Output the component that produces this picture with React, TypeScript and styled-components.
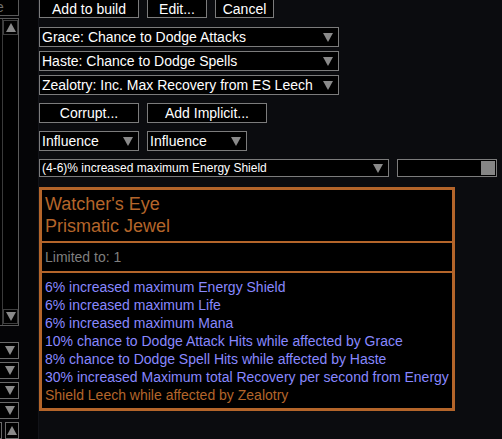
import styled, { createGlobalStyle } from "styled-components";

const GlobalStyle = createGlobalStyle`
  html, body {
    margin: 0;
    padding: 0;
    background: #0b0c0f;
    overflow: hidden;
  }
  body {
    font-family: "Liberation Sans", Arial, sans-serif;
    color: #fff;
  }
`;

const mods = [
  { text: "6% increased maximum Energy Shield", crafted: false },
  { text: "6% increased maximum Life", crafted: false },
  { text: "6% increased maximum Mana", crafted: false },
  { text: "10% chance to Dodge Attack Hits while affected by Grace", crafted: false },
  { text: "8% chance to Dodge Spell Hits while affected by Haste", crafted: false },
  { text: "30% increased Maximum total Recovery per second from Energy", crafted: false },
  { text: "Shield Leech while affected by Zealotry", crafted: true },
];

const Arrow = ({ up }: { up?: boolean }) => (
  <svg width="10" height="9" viewBox="0 0 10 9">
    <polygon points={up ? "0,9 10,9 5,0" : "0,0 10,0 5,9"} fill="#8a8a8a" />
  </svg>
);

export default function App() {
  return (
    <>
      <GlobalStyle />
      <Page>
        <Side>
          <SearchBox>
            <span>e</span>
          </SearchBox>
          <List>
            <ScrollCol>
              <ScrollBtn>
                <Arrow up />
              </ScrollBtn>
              <ScrollBtn>
                <Arrow />
              </ScrollBtn>
            </ScrollCol>
          </List>
          <SideDrops>
            {[0, 1, 2, 3].map((i) => (
              <SideDrop key={i}>
                <Arrow />
              </SideDrop>
            ))}
            <SideFoot>
              <FootStub />
              <FootBtn>
                <Arrow up />
              </FootBtn>
            </SideFoot>
          </SideDrops>
        </Side>

        <Main>
          <Row $top>
            <Button $w={100}>Add to build</Button>
            <Button $w={60}>Edit...</Button>
            <Button $w={59}>Cancel</Button>
          </Row>

          <Drops>
            <Dropdown $w={300}>
              <span>Grace: Chance to Dodge Attacks</span>
              <Arrow />
            </Dropdown>
            <Dropdown $w={300}>
              <span>Haste: Chance to Dodge Spells</span>
              <Arrow />
            </Dropdown>
            <Dropdown $w={300}>
              <span>Zealotry: Inc. Max Recovery from ES Leech</span>
              <Arrow />
            </Dropdown>
          </Drops>

          <Row>
            <Button $w={100} $h={20}>Corrupt...</Button>
            <Button $w={120} $h={20}>Add Implicit...</Button>
          </Row>

          <Row>
            <Dropdown $w={100}>
              <span>Influence</span>
              <Arrow />
            </Dropdown>
            <Dropdown $w={100}>
              <span>Influence</span>
              <Arrow />
            </Dropdown>
          </Row>

          <Row>
            <Dropdown $w={350} $h={18} $small>
              <span>(4-6)% increased maximum Energy Shield</span>
              <Arrow />
            </Dropdown>
            <Slider>
              <Handle />
            </Slider>
          </Row>

          <Tooltip>
            <Header>
              <div>Watcher's Eye</div>
              <div>Prismatic Jewel</div>
            </Header>
            <Limited>Limited to: 1</Limited>
            <Mods>
              {mods.map((m) => (
                <Mod key={m.text} $crafted={m.crafted}>
                  {m.text}
                </Mod>
              ))}
            </Mods>
          </Tooltip>
        </Main>
      </Page>
    </>
  );
}

const Page = styled.div`
  display: flex;
  height: 439px;
  overflow: hidden;
`;

const Side = styled.div`
  width: 41px;
  flex-shrink: 0;
  display: flex;
  flex-direction: column;
  background: #050507;
  border-right: 1px solid #121318;
  margin-left: -2px;
  padding-right: 2px;
  box-sizing: border-box;
`;

const SearchBox = styled.div`
  width: 19px;
  height: 16px;
  margin-top: -2px;
  border: 1px solid #5a5a5a;
  background: #000;
  color: #6e6e6e;
  font-size: 14px;
  line-height: 16px;
  overflow: hidden;
  span {
    display: block;
    margin-left: -3px;
  }
`;

const List = styled.div`
  width: 19px;
  height: 306px;
  margin-top: 2px;
  border: 1px solid #5a5a5a;
  background: #000;
  display: flex;
  justify-content: flex-end;
`;

const ScrollCol = styled.div`
  width: 16px;
  border-left: 1px solid #3a3a3a;
  display: flex;
  flex-direction: column;
  justify-content: space-between;
  padding: 1px 0;
  box-sizing: border-box;
`;

const ScrollBtn = styled.div`
  height: 13px;
  border: 1px solid #3f3f3f;
  display: flex;
  align-items: center;
  justify-content: center;
`;

const SideDrops = styled.div`
  margin-top: 16px;
  display: flex;
  flex-direction: column;
  gap: 3px;
`;

const SideDrop = styled.div`
  width: 16px;
  height: 15px;
  border: 1px solid #6a6a6a;
  background: #000;
  display: flex;
  align-items: center;
  justify-content: flex-end;
  padding-right: 3px;
`;

const SideFoot = styled.div`
  display: flex;
  gap: 3px;
  height: 17px;
`;

const FootStub = styled.div`
  width: 3px;
  border: 1px solid #6a6a6a;
  border-left: none;
  background: #000;
`;

const FootBtn = styled.div`
  width: 12px;
  border: 1px solid #6a6a6a;
  background: #000;
  display: flex;
  align-items: center;
  justify-content: center;
`;

const Main = styled.div`
  display: flex;
  flex-direction: column;
  align-items: flex-start;
  gap: 8px;
`;

const Row = styled.div<{ $top?: boolean }>`
  display: flex;
  gap: 8px;
  margin-top: ${(p) => (p.$top ? "-1px" : "0")};
  margin-bottom: ${(p) => (p.$top ? "1px" : "0")};
`;

const Button = styled.div<{ $w: number; $h?: number }>`
  width: ${(p) => p.$w}px;
  height: ${(p) => p.$h ?? 19}px;
  box-sizing: border-box;
  border: 1px solid #7c7c7c;
  background: #000;
  color: #fff;
  font-size: 14px;
  display: flex;
  align-items: center;
  justify-content: center;
`;

const Drops = styled.div`
  display: flex;
  flex-direction: column;
  gap: 4px;
`;

const Dropdown = styled.div<{ $w: number; $h?: number; $small?: boolean }>`
  width: ${(p) => p.$w}px;
  height: ${(p) => p.$h ?? 20}px;
  box-sizing: border-box;
  border: 1px solid #7c7c7c;
  background: #000;
  color: #fff;
  font-size: ${(p) => (p.$small ? 12 : 14)}px;
  display: flex;
  align-items: center;
  justify-content: space-between;
  padding: 0 5px 0 2px;
  white-space: nowrap;
`;

const Slider = styled.div`
  width: 100px;
  height: 18px;
  box-sizing: border-box;
  border: 1px solid #7c7c7c;
  background: #000;
  display: flex;
  justify-content: flex-end;
  padding: 1px;
`;

const Handle = styled.div`
  width: 14px;
  background: #858585;
`;

const Tooltip = styled.div`
  width: 416px;
  box-sizing: border-box;
  margin-top: 2px;
  border: 3px solid #b4652a;
  background: #000;
  display: flex;
  flex-direction: column;
`;

const Header = styled.div`
  color: #b4652a;
  font-size: 18px;
  line-height: 22px;
  padding: 3px 3px 4px;
  border-bottom: 2px solid #b4652a;
`;

const Limited = styled.div`
  color: #7f7f7f;
  font-size: 14px;
  line-height: 18px;
  padding: 5px 3px;
  border-bottom: 2px solid #b4652a;
`;

const Mods = styled.div`
  padding: 5px 3px 4px;
`;

const Mod = styled.div<{ $crafted: boolean }>`
  color: ${(p) => (p.$crafted ? "#b4652a" : "#8888ff")};
  font-size: 14px;
  line-height: 18px;
  white-space: nowrap;
`;
